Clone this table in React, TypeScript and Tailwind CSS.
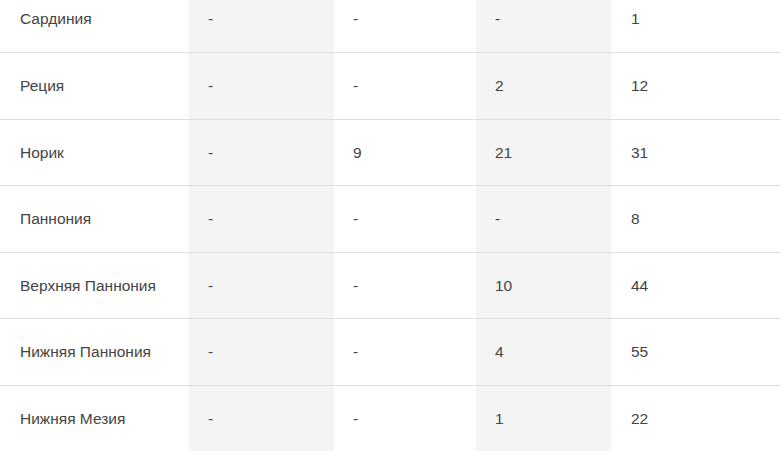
const rows = [
  ["Сардиния", "-", "-", "-", "1"],
  ["Реция", "-", "-", "2", "12"],
  ["Норик", "-", "9", "21", "31"],
  ["Паннония", "-", "-", "-", "8"],
  ["Верхняя Паннония", "-", "-", "10", "44"],
  ["Нижняя Паннония", "-", "-", "4", "55"],
  ["Нижняя Мезия", "-", "-", "1", "22"],
];

const App = () => {
  return (
    <div className="h-[451px] w-[780px] overflow-hidden bg-white font-['Liberation_Sans',Arial,sans-serif] text-[15.5px] text-[#444]">
      <div className="-mt-[14.5px] flex flex-col">
        {rows.map((r, i) => (
          <div
            key={i}
            className={
              "grid h-[66.5px] grid-cols-[189px_145px_142px_135px_169px] " +
              (i > 0 ? "border-t border-[#dedede]" : "")
            }
          >
            <div className="flex items-center pl-5">{r[0]}</div>
            <div className="flex items-center bg-[#f4f4f4] pl-[19px]">{r[1]}</div>
            <div className="flex items-center pl-[19px]">{r[2]}</div>
            <div className="flex items-center bg-[#f4f4f4] pl-[19px]">{r[3]}</div>
            <div className="flex items-center pl-5">{r[4]}</div>
          </div>
        ))}
      </div>
    </div>
  );
};

export default App;
